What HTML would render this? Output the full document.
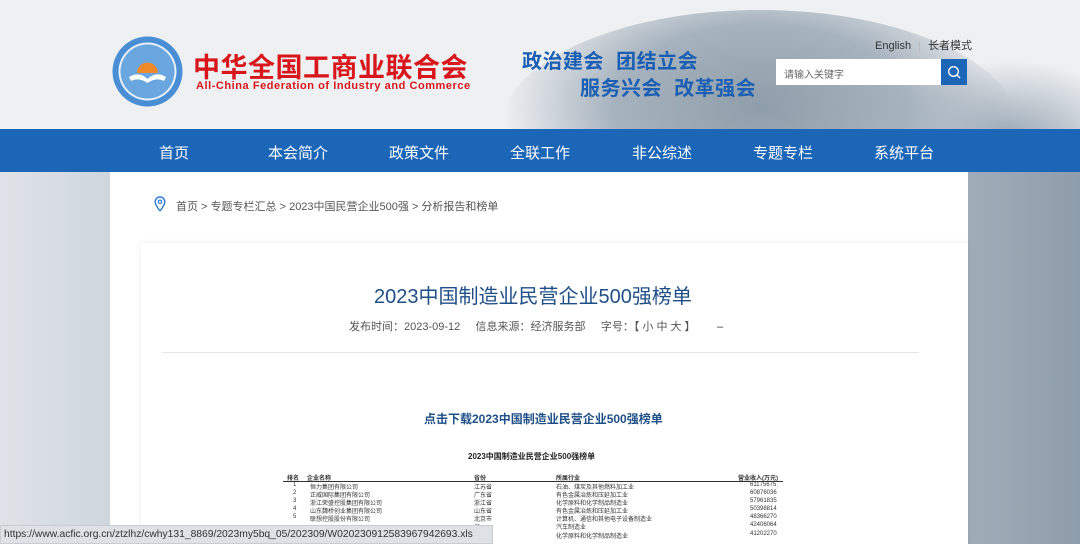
<!DOCTYPE html>
<html><head><meta charset="utf-8"><style>
*{margin:0;padding:0;box-sizing:border-box}
body{width:1080px;height:544px;overflow:hidden;position:relative;font-family:"Liberation Sans","Noto Sans CJK SC",sans-serif;background:linear-gradient(90deg,#dfe3e8 0%,#cfd6de 10%,#e6e8eb 40%,#b9c3cc 75%,#8e9dab 100%)}
.hdr{position:absolute;left:0;top:0;width:1080px;height:129px;background:#eef0f2;overflow:hidden}
.m1{position:absolute;left:500px;top:10px;width:520px;height:240px;border-radius:50%;background:radial-gradient(ellipse at 50% 40%,#8f9eab 0%,#a7b3be 40%,rgba(238,240,242,0) 70%)}
.m2{position:absolute;left:880px;top:60px;width:260px;height:160px;border-radius:50%;background:radial-gradient(ellipse at 50% 50%,#98a6b3 0%,rgba(238,240,242,0) 70%)}
.nav{position:absolute;left:0;top:129px;width:1080px;height:43px;background:#1c66b8}
.nav span{position:absolute;top:13px;color:#fff;font-size:15px}
.main{position:absolute;left:110px;top:172px;width:858px;height:372px;background:#fff}
.card{position:absolute;left:141px;top:243px;width:827px;height:301px;background:#fff;box-shadow:0 0 6px rgba(0,0,0,.08)}
.t{position:absolute;white-space:nowrap}
.row{position:absolute;left:0;width:1080px;font-size:6px;color:#333;height:8px}
.row span{position:absolute}
</style></head><body>
<div class="hdr"><div class="m1"></div><div class="m2"></div></div>
<svg style="position:absolute;left:111px;top:35px" width="73" height="73" viewBox="0 0 73 73">
<circle cx="36.5" cy="36.5" r="35" fill="#4a8fd6"/><circle cx="36.5" cy="36.5" r="29" fill="#e8f0f8"/><circle cx="36.5" cy="36.5" r="27" fill="#6aa6e0"/>
<path d="M26 38a10.5 10.5 0 0 1 21 0z" fill="#f08a28"/>
<path d="M18 42q10-6 18.5 2q8.5-8 18.5-2l-2 4q-8-4-16.5 2q-8.5-6-16.5-2z" fill="#fff"/>
</svg>
<div class="t" style="left:193px;top:46px;font-size:27px;font-weight:bold;color:#d8161b;letter-spacing:.5px">中华全国工商业联合会</div>
<div class="t" style="left:196px;top:80px;font-size:11px;font-weight:bold;color:#d8161b;letter-spacing:.55px">All-China Federation of Industry and Commerce</div>
<div class="t" style="left:522px;top:45px;font-size:20px;font-weight:bold;color:#1a5fb4;letter-spacing:.5px">政治建会 &nbsp;团结立会</div>
<div class="t" style="left:580px;top:72px;font-size:20px;font-weight:bold;color:#1a5fb4;letter-spacing:.5px">服务兴会 &nbsp;改革强会</div>
<div class="t" style="left:875px;top:37px;font-size:11px;color:#333">English <span style="color:#bbb;margin:0 4px">|</span> 长者模式</div>
<div style="position:absolute;left:776px;top:59px;width:165px;height:26px;background:#fff"></div>
<div class="t" style="left:784px;top:66px;font-size:10px;color:#666">请输入关键字</div>
<div style="position:absolute;left:941px;top:59px;width:26px;height:26px;background:#1c66b8"></div>
<svg style="position:absolute;left:947px;top:65px" width="14" height="14"><circle cx="6.5" cy="6.5" r="4.8" stroke="#fff" stroke-width="1.3" fill="none"/><path d="M10 10l3 3" stroke="#fff" stroke-width="1.3"/></svg>
<div class="nav"><span style="left:159px">首页</span><span style="left:268px">本会简介</span><span style="left:389px">政策文件</span><span style="left:510px">全联工作</span><span style="left:632px">非公综述</span><span style="left:753px">专题专栏</span><span style="left:874px">系统平台</span></div>
<div class="main"></div>
<svg style="position:absolute;left:154px;top:196px" width="12" height="16"><path d="M6 1a4.8 4.8 0 0 0-4.8 4.8c0 3.5 4.8 9 4.8 9s4.8-5.5 4.8-9A4.8 4.8 0 0 0 6 1z" fill="none" stroke="#2a7bd4" stroke-width="1.4"/><circle cx="6" cy="5.8" r="1.7" fill="none" stroke="#2a7bd4" stroke-width="1.2"/></svg>
<div class="t" style="left:176px;top:198px;font-size:11px;color:#555">首页 &gt; 专题专栏汇总 &gt; 2023中国民营企业500强 &gt; 分析报告和榜单</div>
<div class="card"></div>
<div class="t" style="left:374px;top:280px;font-size:20px;color:#1f4f87">2023中国制造业民营企业500强榜单</div>
<div class="t" style="left:349px;top:318px;font-size:11px;color:#555">发布时间：2023-09-12 &nbsp; &nbsp; 信息来源：经济服务部 &nbsp; &nbsp; 字号：【 小 中 大 】 &nbsp; &nbsp; &nbsp; <span style="color:#333">–</span></div>
<div style="position:absolute;left:162px;top:352px;width:757px;height:1px;background:#e6e6e6"></div>
<div class="t" style="left:424px;top:410px;font-size:12px;font-weight:bold;color:#1f4f87">点击下载2023中国制造业民营企业500强榜单</div>
<div class="t" style="left:468px;top:451px;font-size:8px;font-weight:bold;color:#222">2023中国制造业民营企业500强榜单</div>
<div class="row" style="top:473px;font-weight:bold"><span style="left:287px">排名</span><span style="left:307px">企业名称</span><span style="left:474px">省份</span><span style="left:556px">所属行业</span><span style="left:738px">营业收入(万元)</span></div>
<div style="position:absolute;left:283px;top:481px;width:500px;height:1px;background:#333"></div>
<div class="row" style="top:482px"><span style="left:293px">1</span><span style="left:310px">恒力集团有限公司</span><span style="left:474px">江苏省</span><span style="left:556px">石油、煤炭及其他燃料加工业</span><span style="left:750px">61175675</span></div>
<div class="row" style="top:490px"><span style="left:293px">2</span><span style="left:310px">正威国际集团有限公司</span><span style="left:474px">广东省</span><span style="left:556px">有色金属冶炼和压延加工业</span><span style="left:750px">60876036</span></div>
<div class="row" style="top:498px"><span style="left:293px">3</span><span style="left:310px">浙江荣盛控股集团有限公司</span><span style="left:474px">浙江省</span><span style="left:556px">化学原料和化学制品制造业</span><span style="left:750px">57961835</span></div>
<div class="row" style="top:506px"><span style="left:293px">4</span><span style="left:310px">山东魏桥创业集团有限公司</span><span style="left:474px">山东省</span><span style="left:556px">有色金属冶炼和压延加工业</span><span style="left:750px">50398814</span></div>
<div class="row" style="top:514px"><span style="left:293px">5</span><span style="left:310px">联想控股股份有限公司</span><span style="left:474px">北京市</span><span style="left:556px">计算机、通信和其他电子设备制造业</span><span style="left:750px">48366270</span></div>
<div class="row" style="top:522px"><span style="left:474px">省</span><span style="left:556px">汽车制造业</span><span style="left:750px">42406064</span></div>
<div class="row" style="top:531px"><span style="left:474px">省</span><span style="left:556px">化学原料和化学制品制造业</span><span style="left:750px">41202270</span></div>
<div style="position:absolute;left:0;top:525px;width:493px;height:19px;background:#dee1e6;border:1px solid #c9ccd1"></div>
<div class="t" style="left:4px;top:529px;font-size:10.3px;color:#333">https://www.acfic.org.cn/ztzlhz/cwhy131_8869/2023my5bq_05/202309/W020230912583967942693.xls</div>
</body></html>
